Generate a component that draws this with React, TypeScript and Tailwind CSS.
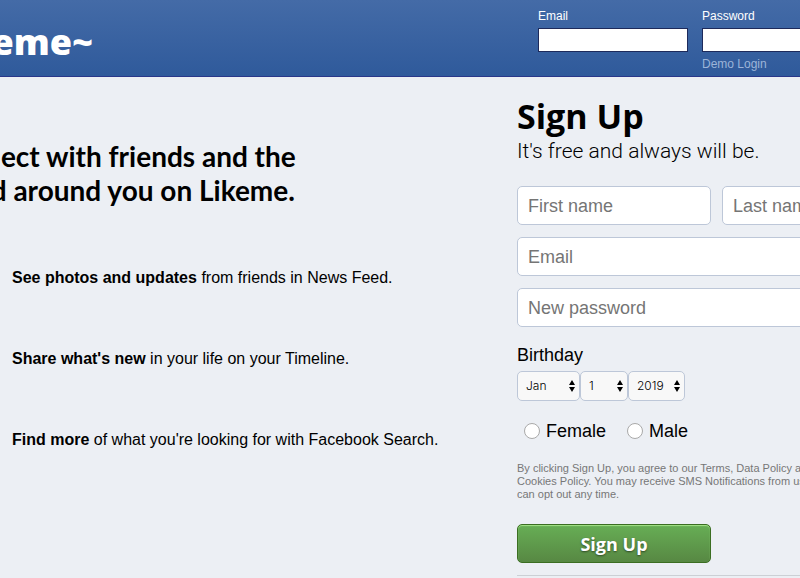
import React from "react";

const features = [
  { title: "See photos and updates", text: "from friends in News Feed." },
  { title: "Share what's new", text: "in your life on your Timeline." },
  { title: "Find more", text: "of what you're looking for with Facebook Search." },
];

const months = ["Jan", "Feb", "Mar", "Apr", "May", "Jun", "Jul", "Aug", "Sep", "Oct", "Nov", "Dec"];
const days = Array.from({ length: 31 }, (_, i) => String(i + 1));
const years = Array.from({ length: 100 }, (_, i) => String(2019 - i));

function HeaderField({ id, label, type }: { id: string; label: string; type: string }) {
  return (
    <div className="flex w-[150px] flex-col">
      <label htmlFor={id} className="text-xs leading-4 text-white">
        {label}
      </label>
      <input
        id={id}
        type={type}
        className="mt-1 h-6 w-full border border-[#1d2a5b] bg-white px-1 text-xs text-black outline-none"
      />
    </div>
  );
}

function Field({ label, type = "text" }: { label: string; type?: string }) {
  return (
    <input
      type={type}
      aria-label={label}
      placeholder={label}
      className="h-[39px] w-full min-w-0 flex-1 rounded-[5px] border border-[#bdc7d8] bg-white px-2.5 pt-0.5 text-lg text-black outline-none placeholder:text-[#757575]"
    />
  );
}

function DateSelect({ label, options, width }: { label: string; options: string[]; width: string }) {
  return (
    <div className={`relative ${width}`}>
      <select
        aria-label={label}
        className="h-[30px] w-full appearance-none rounded-[5px] border border-[#bdc7d8] bg-[#f8f8f8] pl-2 font-['Inter',sans-serif] text-xs font-light text-black outline-none"
      >
        {options.map((option) => (
          <option key={option}>{option}</option>
        ))}
      </select>
      <svg viewBox="0 0 6 12" className="pointer-events-none absolute right-[5px] top-[9px] h-3 w-1.5" aria-hidden="true">
        <path d="M3 0 6 5H0ZM3 12 0 7H6Z" fill="#000" />
      </svg>
    </div>
  );
}

function Radio({ label }: { label: string }) {
  return (
    <label className="flex items-center gap-1.5 text-lg leading-5">
      <input
        type="radio"
        name="gender"
        className="size-4 appearance-none rounded-full border border-[#a9a9a9] bg-white checked:border-[5px] checked:border-[#3b7ded]"
      />
      {label}
    </label>
  );
}

export default function App() {
  return (
    <div className="min-h-screen overflow-hidden bg-[#eceff4] font-['Liberation_Sans',Arial,sans-serif] text-black">
      <header className="flex h-[77px] justify-center border-b border-[#29378a] bg-linear-to-b from-[#446ba7] to-[#2f5a9b]">
        <div className="flex w-[1032px] shrink-0 justify-between pl-[51px]">
          <h1 className="pt-5 font-['Open_Sans',sans-serif] text-4xl leading-[44px] font-extrabold text-white">
            Likeme~
          </h1>
          <form className="flex gap-3.5 pt-2" onSubmit={(e) => e.preventDefault()}>
            <HeaderField id="login-email" label="Email" type="email" />
            <div className="flex flex-col items-start">
              <HeaderField id="login-password" label="Password" type="password" />
              <a href="#demo" className="mt-1 text-xs leading-4 text-[#9cb4d8]">
                Demo Login
              </a>
            </div>
            <button type="submit" className="mt-5 h-6 w-[50px] border border-[#1d2a5b] bg-[#4267b2] text-xs text-white">
              Log In
            </button>
          </form>
        </div>
      </header>

      <main className="flex justify-center">
        <div className="flex w-[1032px] shrink-0 justify-between pl-[51px]">
          <section className="pt-[62px]">
            <h2 className="w-[400px] font-['Lato',sans-serif] text-[28px] leading-[34px] font-bold">
              Connect with friends and the
              <br />
              world around you on Likeme.
            </h2>
            <ul className="mt-[61px] flex flex-col gap-[61px] pl-[77px]">
              {features.map((feature) => (
                <li key={feature.title} className="text-base leading-5 whitespace-nowrap">
                  <strong>{feature.title}</strong> {feature.text}
                </li>
              ))}
            </ul>
          </section>

          <section className="w-[399px] shrink-0 pt-4">
            <h2 className="font-['Open_Sans',sans-serif] text-[34px] leading-[46px] font-bold">Sign Up</h2>
            <p className="font-['Roboto',sans-serif] text-[21px] leading-6 font-light">It's free and always will be.</p>
            <form className="mt-[23px] flex flex-col gap-3" onSubmit={(e) => e.preventDefault()}>
              <div className="flex gap-[11px]">
                <Field label="First name" />
                <Field label="Last name" />
              </div>
              <div className="flex">
                <Field label="Email" type="email" />
              </div>
              <div className="flex">
                <Field label="New password" type="password" />
              </div>
              <fieldset className="mt-1">
                <legend className="text-lg leading-6">Birthday</legend>
                <div className="mt-1 flex">
                  <DateSelect label="Month" options={months} width="w-[63px]" />
                  <DateSelect label="Day" options={days} width="w-12" />
                  <DateSelect label="Year" options={years} width="w-[57px]" />
                </div>
              </fieldset>
              <div className="mt-2 flex gap-[21px] pl-[7px]">
                <Radio label="Female" />
                <Radio label="Male" />
              </div>
              <p className="mt-[9px] w-[316px] text-[11px] leading-[13px] text-[#777]">
                By clicking Sign Up, you agree to our Terms, Data Policy and Cookies Policy. You may receive SMS
                Notifications from us and can opt out any time.
              </p>
              <button
                type="submit"
                className="mt-[11px] h-[39px] w-[194px] rounded-[5px] border border-[#3b6e22] bg-linear-to-b from-[#67ae55] to-[#578843] font-['Open_Sans',sans-serif] text-lg font-bold text-white shadow-[inset_0_1px_1px_#a4e388] text-shadow-[0_1px_2px_rgba(0,0,0,0.5)]"
              >
                Sign Up
              </button>
              <hr className="border-[#ccd0d5]" />
            </form>
          </section>
        </div>
      </main>
    </div>
  );
}
